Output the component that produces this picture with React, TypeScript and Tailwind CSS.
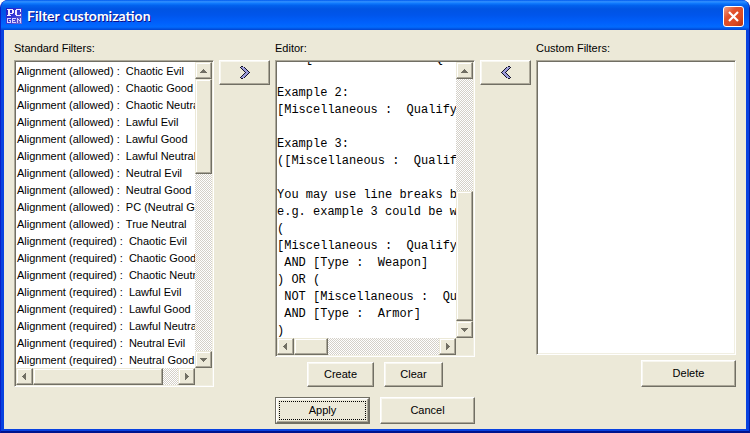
import { useId } from "react";
import type { ReactNode } from "react";

const cx = (...parts: string[]) => parts.join(" ");

const RAISED =
  "border border-t-white border-l-white border-r-[#716f64] border-b-[#716f64] bg-[#ece9d8] shadow-[inset_-1px_-1px_0_#aca899,inset_1px_1px_0_#f8f7f0]";
const SCROLL_PART =
  "border border-t-[#ece9d8] border-l-[#ece9d8] border-r-[#716f64] border-b-[#716f64] bg-[#ece9d8] shadow-[inset_-1px_-1px_0_#aca899,inset_1px_1px_0_#ffffff]";
const SUNKEN =
  "border border-t-[#aca899] border-l-[#aca899] border-r-white border-b-white p-px shadow-[inset_1px_1px_0_#716f64,inset_-1px_-1px_0_#f1efe2]";
const TRACK =
  "bg-[repeating-conic-gradient(#d4d0c8_0_25%,#ffffff_0_50%)] bg-[length:2px_2px]";
const LABEL = "h-[15px] leading-[17px]";

const standardFilters = [
  "Alignment (allowed) :  Chaotic Evil",
  "Alignment (allowed) :  Chaotic Good",
  "Alignment (allowed) :  Chaotic Neutral",
  "Alignment (allowed) :  Lawful Evil",
  "Alignment (allowed) :  Lawful Good",
  "Alignment (allowed) :  Lawful Neutral",
  "Alignment (allowed) :  Neutral Evil",
  "Alignment (allowed) :  Neutral Good",
  "Alignment (allowed) :  PC (Neutral Good)",
  "Alignment (allowed) :  True Neutral",
  "Alignment (required) :  Chaotic Evil",
  "Alignment (required) :  Chaotic Good",
  "Alignment (required) :  Chaotic Neutral",
  "Alignment (required) :  Lawful Evil",
  "Alignment (required) :  Lawful Good",
  "Alignment (required) :  Lawful Neutral",
  "Alignment (required) :  Neutral Evil",
  "Alignment (required) :  Neutral Good",
];

const editorText = `NOT [Miscellaneous :  Qualify]

Example 2:
[Miscellaneous :  Qualify] AND [Type :  Weapon]

Example 3:
([Miscellaneous :  Qualify] AND [Type :  Weapon]) OR (NOT [Miscellaneous :  Qualify] AND [Type :  Armor])

You may use line breaks between filters,
e.g. example 3 could be written as:
(
[Miscellaneous :  Qualify]
 AND [Type :  Weapon]
) OR (
 NOT [Miscellaneous :  Qualify]
 AND [Type :  Armor]
)`;

type Direction = "up" | "down" | "left" | "right";

const arrows: Record<Direction, string> = {
  up: "M3 2h1v1h1v1h1v1h1v1H0V5h1V4h1V3h1z",
  down: "M0 2h7v1H6v1H5v1H4v1H3V5H2V4H1V3H0z",
  left: "M5 0v7H4V6H3V5H2V4H1V3h1V2h1V1h1V0z",
  right: "M2 0v7h1V6h1V5h1V4h1V3H5V2H4V1H3V0z",
};

function ScrollButton({ direction }: { direction: Direction }) {
  return (
    <button
      type="button"
      aria-label={`Scroll ${direction}`}
      className={cx(SCROLL_PART, "flex size-[17px] shrink-0 items-center justify-center")}
    >
      <svg viewBox="0 0 7 7" className="size-[7px]" shapeRendering="crispEdges">
        <path d={arrows[direction]} fill="#716f64" />
      </svg>
    </button>
  );
}

function ScrollPane({
  vertical,
  horizontal,
  children,
}: {
  vertical: ReactNode;
  horizontal: ReactNode;
  children: ReactNode;
}) {
  return (
    <div className={cx(SUNKEN, "grid grow grid-cols-[minmax(0,1fr)_17px] grid-rows-[minmax(0,1fr)_17px] bg-[#ece9d8]")}>
      {children}
      <div className={cx(TRACK, "flex flex-col")}>
        <ScrollButton direction="up" />
        {vertical}
        <ScrollButton direction="down" />
      </div>
      <div className={cx(TRACK, "flex")}>
        <ScrollButton direction="left" />
        {horizontal}
        <ScrollButton direction="right" />
      </div>
    </div>
  );
}

const chevronRows = Array.from({ length: 13 }, (_, y) => ({ y, x: Math.min(y, 12 - y) }));

function Chevron({ flipped = false }: { flipped?: boolean }) {
  return (
    <svg
      viewBox="0 0 10 13"
      className={cx("h-[13px] w-[10px]", flipped ? "-scale-x-100" : "")}
      shapeRendering="crispEdges"
    >
      {chevronRows.map(({ x, y }) =>
        x === 0 ? (
          <rect key={y} x={1} y={y} width={2} height={1} fill="#10102a" />
        ) : (
          <g key={y}>
            <rect x={x - 1} y={y} width={5} height={1} fill="#10102a" />
            <rect x={x} y={y} width={3} height={1} fill="#9c9cd8" />
          </g>
        ),
      )}
    </svg>
  );
}

function TransferButton({ label, flipped }: { label: string; flipped?: boolean }) {
  return (
    <button type="button" aria-label={label} className={cx(RAISED, "mt-5 flex h-[25px] items-center justify-center")}>
      <Chevron flipped={flipped} />
    </button>
  );
}

function PushButton({ className, children }: { className: string; children: ReactNode }) {
  return (
    <button type="button" className={cx(RAISED, "flex items-center justify-center", className)}>
      {children}
    </button>
  );
}

function TitleBar() {
  return (
    <header className="flex h-[30px] items-center gap-[5px] bg-[linear-gradient(180deg,#0058ee_0%,#3593ff_6%,#127dff_10%,#0262ee_18%,#0054e3_30%,#0055eb_50%,#0060fc_75%,#026afe_90%,#0144d0_100%)] pt-[2px] pr-[5px] pl-[5px]">
      <svg viewBox="0 0 16 16" className="size-4" aria-hidden="true" shapeRendering="crispEdges">
        <defs>
          <linearGradient id="logo-fill" x1="0" y1="0" x2="1" y2="1">
            <stop offset="0" stopColor="#1c1cc8" />
            <stop offset="0.55" stopColor="#3a3ad8" />
            <stop offset="1" stopColor="#7a6cc8" />
          </linearGradient>
        </defs>
        <rect width="16" height="16" fill="url(#logo-fill)" />
        <path fill="#f0e8ff" d="M1 1h6v1h1v3H7v1H4v1h1v1H1V7h1V2H1zM4 2v3h2V2zM10 1h5v3h-1V2h-3v5h3V6h1v2h-5V7H9V2h1z" />
        <path
          fill="none"
          stroke="#d8d0ff"
          d="M5 10.500H1.500v4h3V12M3 12.500h1M10 10.500H6.500v4H10M7 12.500h2M11.500 15v-5M12 11.500h1M13 12.500h1M14.500 10v5"
        />
      </svg>
      <h1 className="grow font-['Lato','Noto_Sans',sans-serif] text-[14px] leading-4 font-bold text-white [text-shadow:1px_1px_0_#0f1089]">
        Filter customization
      </h1>
      <button
        type="button"
        aria-label="Close"
        className="flex size-[21px] items-center justify-center rounded-[3px] border border-white bg-[linear-gradient(135deg,#f0a088,#e2512c_35%,#dc4a22_70%,#b83210)]"
      >
        <svg viewBox="0 0 11 11" className="size-[11px]">
          <path d="M1 1l9 9M10 1l-9 9" stroke="#fff" strokeWidth="2.200" />
        </svg>
      </button>
    </header>
  );
}

export default function App() {
  const id = useId();
  return (
    <div className="overflow-hidden rounded-t-lg border-x border-b-2 border-r-[#001ca8] border-b-[#00138c] border-l-[#0820c8] bg-[#0831d9] font-['Liberation_Sans',Arial,sans-serif] text-[11px] leading-[15px] text-black">
      <TitleBar />
      <main className="border-x-[3px] border-b-2 border-[#0842e0] bg-[#ece9d8] px-[10px] pt-[10px] pb-[5px]">
        <div className="grid grid-cols-[minmax(0,1fr)_51px_minmax(0,1fr)_51px_minmax(0,1fr)] gap-[5px]">
          <section className="flex flex-col gap-[5px]">
            <label htmlFor={`${id}-standard`} className={LABEL}>
              Standard Filters:
            </label>
            <ScrollPane
              vertical={
                <>
                  <div className={cx(SCROLL_PART, "h-[95px]")} />
                  <div className="grow" />
                </>
              }
              horizontal={
                <>
                  <div className={cx(SCROLL_PART, "w-[130px]")} />
                  <div className="grow" />
                </>
              }
            >
              <select
                id={`${id}-standard`}
                multiple
                size={18}
                className="h-[306px] w-full appearance-none overflow-hidden bg-white pt-[3px] outline-none"
              >
                {standardFilters.map((name) => (
                  <option key={name} className="h-[17px] min-h-0 p-0 pl-px leading-[17px]">
                    {name.replace("  ", "\u00a0\u00a0")}
                  </option>
                ))}
              </select>
            </ScrollPane>
          </section>

          <div className="flex flex-col">
            <TransferButton label="Add to editor" />
          </div>

          <section className="flex flex-col gap-[5px]">
            <label htmlFor={`${id}-editor`} className={LABEL}>
              Editor:
            </label>
            <ScrollPane
              vertical={
                <>
                  <div className="grow" />
                  <div className={cx(SCROLL_PART, "h-[130px]")} />
                </>
              }
              horizontal={
                <>
                  <div className={cx(SCROLL_PART, "w-[34px]")} />
                  <div className="grow" />
                </>
              }
            >
              <div className="flex h-[276px] flex-col justify-end overflow-hidden bg-white">
                <textarea
                  id={`${id}-editor`}
                  defaultValue={editorText}
                  wrap="off"
                  spellCheck={false}
                  className="block h-[287px] w-full shrink-0 resize-none overflow-hidden bg-white font-['Liberation_Mono','Courier_New',monospace] text-[12px] leading-[17px] whitespace-pre outline-none"
                />
              </div>
            </ScrollPane>
            <div className="flex justify-center gap-[10px]">
              <PushButton className="h-[25px] w-[67px]">Create</PushButton>
              <PushButton className="h-[25px] w-[59px]">Clear</PushButton>
            </div>
          </section>

          <div className="flex flex-col">
            <TransferButton label="Load into editor" flipped />
          </div>

          <section className="flex flex-col gap-[5px]">
            <label htmlFor={`${id}-custom`} className={LABEL}>
              Custom Filters:
            </label>
            <select
              id={`${id}-custom`}
              multiple
              className={cx(SUNKEN, "min-h-0 w-full grow appearance-none bg-white outline-none")}
            />
            <PushButton className="h-[27px] w-[95px] self-end">Delete</PushButton>
          </section>
        </div>
        <div className="mt-[10px] flex justify-center gap-[10px]">
          <button type="submit" className="h-[27px] w-[95px] border border-[#716f64]">
            <span className={cx(RAISED, "flex h-full items-center justify-center p-[2px]")}>
              <span className="flex size-full items-center justify-center border border-dotted border-black">Apply</span>
            </span>
          </button>
          <PushButton className="h-[27px] w-[95px]">Cancel</PushButton>
        </div>
      </main>
    </div>
  );
}
